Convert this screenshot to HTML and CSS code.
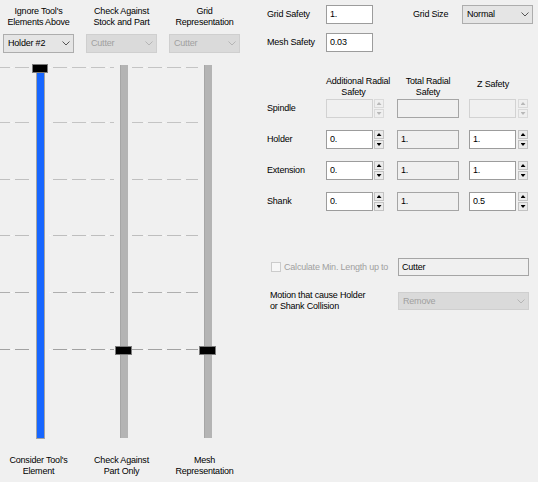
FILE: index.html
```html
<!DOCTYPE html>
<html lang="en">
<head>
  <meta charset="UTF-8" />
  <title>Holder Collision</title>
  <link rel="stylesheet" href="styles.css">
</head>
<body>
  <div class="dialog">
    <div class="sliders">
      <div class="cols heads">
        <div>Ignore Tool's<br>Elements Above</div>
        <div>Check Against<br>Stock and Part</div>
        <div>Grid<br>Representation</div>
      </div>
      <div class="cols combos">
        <div class="combo"><span>Holder #2</span><svg class="chev" width="8" height="5" viewBox="0 0 8 5"><polyline points="0.5,0.5 4,4 7.5,0.5"/></svg></div>
        <div class="combo off"><span>Cutter</span><svg class="chev" width="8" height="5" viewBox="0 0 8 5"><polyline points="0.5,0.5 4,4 7.5,0.5"/></svg></div>
        <div class="combo off"><span>Cutter</span><svg class="chev" width="8" height="5" viewBox="0 0 8 5"><polyline points="0.5,0.5 4,4 7.5,0.5"/></svg></div>
      </div>

      <!-- ticks, tracks and thumbs -->
      <svg class="field" width="245" height="380" viewBox="0 0 245 380">
        <defs>
          <pattern id="dash" patternUnits="userSpaceOnUse" width="19" height="1">
            <rect x="0" y="0" width="10" height="1" fill="#888"/>
            <rect x="11" y="0" width="2" height="1" fill="#fff"/>
            <rect x="15" y="0" width="4" height="1" fill="#888"/>
          </pattern>
          <g id="tick">
            <rect x="0" y="0" width="29" height="1"/>
            <rect x="48" y="0" width="66" height="1"/>
            <rect x="132" y="0" width="66" height="1"/>
          </g>
        </defs>
        <g fill="url(#dash)">
          <use href="#tick" y="7" opacity="0.42"/>
          <use href="#tick" y="62" opacity="0.42"/>
          <use href="#tick" y="119" opacity="0.45"/>
          <use href="#tick" y="175" opacity="0.48"/>
          <use href="#tick" y="232" opacity="0.62"/>
          <use href="#tick" y="289" opacity="0.75"/>
        </g>
        <rect x="36.5" y="4.5" width="8" height="374" fill="#1766ff" stroke="#a3a3a3"/>
        <rect x="120" y="5" width="8" height="373" fill="#b4b4b4"/>
        <rect x="120" y="5" width="1" height="373" fill="#a6a6a6"/>
        <rect x="204" y="5" width="8" height="373" fill="#b4b4b4"/>
        <rect x="204" y="5" width="1" height="373" fill="#a6a6a6"/>
        <rect x="32.5" y="4.5" width="15" height="8" fill="#000" stroke="#7c7c7c"/>
        <rect x="115.5" y="286.5" width="16" height="8" fill="#000" stroke="#7c7c7c"/>
        <rect x="199.5" y="286.5" width="16" height="8" fill="#000" stroke="#7c7c7c"/>
      </svg>

      <div class="cols foots">
        <div>Consider Tool's<br>Element</div>
        <div>Check Against<br>Part Only</div>
        <div>Mesh<br>Representation</div>
      </div>
    </div>

    <div class="settings">
      <div class="row">
        <div class="lbl">Grid Safety</div>
        <div class="box">1.</div>
        <div class="lbl size-lbl">Grid Size</div>
        <div class="combo size"><span>Normal</span><svg class="chev" width="8" height="5" viewBox="0 0 8 5"><polyline points="0.5,0.5 4,4 7.5,0.5"/></svg></div>
      </div>
      <div class="row mesh">
        <div class="lbl">Mesh Safety</div>
        <div class="box">0.03</div>
      </div>

      <div class="thead">
        <div class="h1">Additional Radial<br>Safety</div>
        <div class="h2">Total Radial<br>Safety</div>
        <div class="h3">Z Safety</div>
      </div>

      <div class="rows">
        <div class="row">
          <div class="lbl">Spindle</div>
          <div class="spin off"><div class="box"></div><div class="arrows"><span class="up"></span><span class="dn"></span></div></div>
          <div class="box total ro"></div>
          <div class="spin z off"><div class="box"></div><div class="arrows"><span class="up"></span><span class="dn"></span></div></div>
        </div>
        <div class="row">
          <div class="lbl">Holder</div>
          <div class="spin"><div class="box">0.</div><div class="arrows"><span class="up"></span><span class="dn"></span></div></div>
          <div class="box total">1.</div>
          <div class="spin z"><div class="box">1.</div><div class="arrows"><span class="up"></span><span class="dn"></span></div></div>
        </div>
        <div class="row">
          <div class="lbl">Extension</div>
          <div class="spin"><div class="box">0.</div><div class="arrows"><span class="up"></span><span class="dn"></span></div></div>
          <div class="box total">1.</div>
          <div class="spin z"><div class="box">1.</div><div class="arrows"><span class="up"></span><span class="dn"></span></div></div>
        </div>
        <div class="row">
          <div class="lbl">Shank</div>
          <div class="spin"><div class="box">0.</div><div class="arrows"><span class="up"></span><span class="dn"></span></div></div>
          <div class="box total">1.</div>
          <div class="spin z"><div class="box">0.5</div><div class="arrows"><span class="up"></span><span class="dn"></span></div></div>
        </div>
      </div>

      <div class="row calc">
        <div class="calc-lbl"><span class="check"></span>Calculate Min. Length up to</div>
        <div class="box wide ro">Cutter</div>
      </div>
      <div class="row motion">
        <div class="motion-lbl">Motion that cause Holder<br>or Shank Collision</div>
        <div class="combo off wide"><span>Remove</span><svg class="chev" width="8" height="5" viewBox="0 0 8 5"><polyline points="0.5,0.5 4,4 7.5,0.5"/></svg></div>
      </div>
    </div>
  </div>
</body>
</html>
```

FILE: styles.css
```css
body {
  margin: 0;
  background-color: #f0f0f0;
  font-family: "Liberation Sans", Arial, sans-serif;
  font-size: 9px;
  letter-spacing: -0.2px;
  line-height: 11px;
  color: #000;
}
.dialog {
  display: flex;
  width: 538px;
  height: 482px;
}
.sliders {
  width: 245px;
  flex: none;
}
.cols {
  display: flex;
  gap: 12px;
  padding-left: 3px;
}
.cols > div {
  width: 71px;
  flex: none;
  text-align: center;
  white-space: nowrap;
}
.heads {
  padding-top: 6px;
}
.combos {
  margin-top: 6px;
}
.combo {
  height: 19px;
  box-sizing: border-box;
  border: 1px solid #adadad;
  background-color: #e5e5e5;
  display: flex;
  align-items: center;
  justify-content: space-between;
  padding: 0 3px 0 4px;
}
.cols > .combo {
  text-align: left;
}
.chev polyline {
  fill: none;
  stroke: #555;
  stroke-width: 1;
}
.combo.off {
  background-color: #dadada;
  border-color: #cfcfcf;
  color: #a0a0a0;
}
.combo.off .chev polyline {
  stroke: #b5b5b5;
}
.field {
  display: block;
  margin-top: 7px;
}
.foots {
  margin-top: 15px;
}

.settings {
  flex: 1;
  padding: 5px 0 0 22px;
}
.row {
  display: flex;
  align-items: center;
  height: 19px;
}
.lbl {
  width: 59px;
  flex: none;
}
.box {
  width: 47px;
  height: 19px;
  flex: none;
  box-sizing: border-box;
  border: 1px solid #9c9c9c;
  background-color: #fff;
  padding-left: 3px;
  display: flex;
  align-items: center;
}
.size-lbl {
  margin-left: 40px;
  width: 49px;
}
.combo.size {
  width: 71px;
}
.mesh {
  margin-top: 9px;
}
.thead {
  display: flex;
  margin-top: 24px;
  padding-left: 59px;
  height: 22px;
  text-align: center;
  white-space: nowrap;
}
.h1 {
  width: 55px;
}
.h2 {
  width: 62px;
  margin-left: 16px;
}
.h3 {
  width: 48px;
  margin-left: 10px;
  padding-top: 3px;
}
.rows {
  display: flex;
  flex-direction: column;
  gap: 12px;
  margin-top: 1px;
}
.spin {
  display: flex;
  gap: 1px;
}
.spin.z {
  margin-left: 10px;
  gap: 2px;
}
.arrows {
  display: flex;
  flex-direction: column;
  gap: 1px;
}
.arrows span {
  width: 10px;
  height: 9px;
  box-sizing: border-box;
  border: 1px solid #c2c2c2;
  background-color: #ebebeb;
  display: flex;
  align-items: center;
  justify-content: center;
}
.arrows span::after {
  content: "";
  width: 5px;
  height: 3px;
  background-color: #000;
}
.up::after {
  clip-path: polygon(50% 0, 100% 100%, 0 100%);
}
.dn::after {
  clip-path: polygon(0 0, 100% 0, 50% 100%);
}
.spin.off .box {
  border-color: #d2d2d2;
  background-color: #f0f0f0;
}
.spin.off .arrows span {
  border-color: #dadada;
  background-color: #efefef;
}
.spin.off .arrows span::after {
  background-color: #b8b8b8;
}
.total {
  width: 62px;
  margin-left: 13px;
  background-color: #f0f0f0;
  border-color: #a5a5a5;
}
.calc {
  margin-top: 47px;
  height: 18px;
}
.calc-lbl {
  width: 131px;
  flex: none;
  box-sizing: border-box;
  padding-left: 4px;
  display: flex;
  align-items: center;
  color: #a0a0a0;
  white-space: nowrap;
}
.check {
  width: 10px;
  height: 10px;
  box-sizing: border-box;
  border: 1px solid #cccccc;
  background-color: #f7f7f7;
  margin-right: 3px;
}
.box.wide,
.combo.wide {
  width: 131px;
  height: 18px;
}
.box.ro {
  background-color: #f0f0f0;
  border-color: #a5a5a5;
}
.motion {
  margin-top: 15px;
  height: 20px;
}
.motion-lbl {
  width: 131px;
  flex: none;
  box-sizing: border-box;
  padding-left: 3px;
  white-space: nowrap;
}
```
